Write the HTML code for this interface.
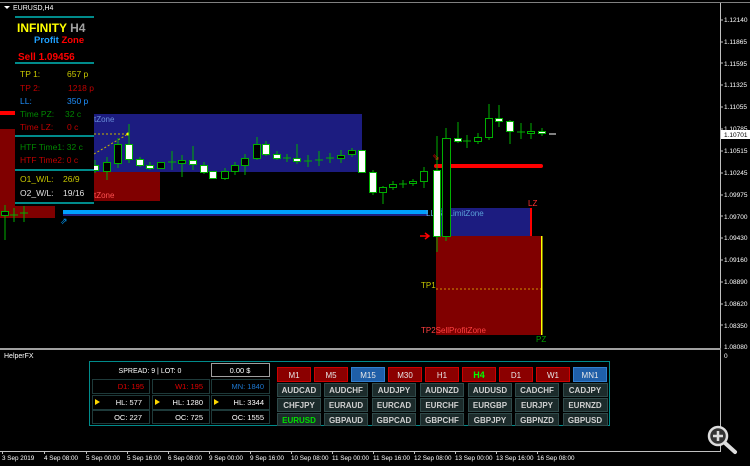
<!DOCTYPE html>
<html><head><meta charset="utf-8"><style>
html,body{margin:0;padding:0;background:#000;width:750px;height:466px;overflow:hidden}
svg{display:block}
text{font-family:"Liberation Sans",sans-serif}
</style></head><body>
<svg width="750" height="466" viewBox="0 0 750 466" xmlns="http://www.w3.org/2000/svg">
<rect width="750" height="466" fill="#000"/>
<line x1="0" y1="2.5" x2="750" y2="2.5" stroke="#808080"/>
<line x1="720.5" y1="3" x2="720.5" y2="451" stroke="#c0c0c0"/>
<rect x="0" y="348" width="721" height="2" fill="#a0a0a0"/>
<line x1="0" y1="451.5" x2="721" y2="451.5" stroke="#c0c0c0"/>
<path d="M4 6 L10 6 L7 9 Z" fill="#fff"/>
<text x="13" y="10" font-size="7" fill="#fff">EURUSD,H4</text>
<text x="4" y="358" font-size="7" fill="#fff">HelperFX</text>
<g font-size="6.5" fill="#fff">
<text x="724" y="22">1.12140</text><text x="724" y="44">1.11865</text><text x="724" y="66">1.11595</text><text x="724" y="87">1.11325</text><text x="724" y="109">1.11055</text><text x="724" y="131">1.10785</text><text x="724" y="153">1.10515</text><text x="724" y="175">1.10245</text><text x="724" y="197">1.09975</text><text x="724" y="219">1.09700</text><text x="724" y="240">1.09430</text><text x="724" y="262">1.09160</text><text x="724" y="284">1.08890</text><text x="724" y="306">1.08620</text><text x="724" y="328">1.08350</text><text x="724" y="349">1.08080</text><text x="724" y="358">0</text>
</g>
<g stroke="#c0c0c0"><line x1="720" y1="20" x2="723" y2="20"/><line x1="720" y1="42" x2="723" y2="42"/><line x1="720" y1="63" x2="723" y2="63"/><line x1="720" y1="85" x2="723" y2="85"/><line x1="720" y1="107" x2="723" y2="107"/><line x1="720" y1="129" x2="723" y2="129"/><line x1="720" y1="151" x2="723" y2="151"/><line x1="720" y1="173" x2="723" y2="173"/><line x1="720" y1="195" x2="723" y2="195"/><line x1="720" y1="216" x2="723" y2="216"/><line x1="720" y1="238" x2="723" y2="238"/><line x1="720" y1="260" x2="723" y2="260"/><line x1="720" y1="282" x2="723" y2="282"/><line x1="720" y1="304" x2="723" y2="304"/><line x1="720" y1="325" x2="723" y2="325"/></g>
<rect x="721" y="130" width="29" height="9" fill="#fff"/>
<text x="724" y="137" font-size="6.5" fill="#000">1.10701</text>
<g font-size="6.3" fill="#fff">
<text x="2" y="460">3 Sep 2019</text><text x="44" y="460">4 Sep 08:00</text><text x="86" y="460">5 Sep 00:00</text><text x="127" y="460">5 Sep 16:00</text><text x="168" y="460">6 Sep 08:00</text><text x="209" y="460">9 Sep 00:00</text><text x="250" y="460">9 Sep 16:00</text><text x="291" y="460">10 Sep 08:00</text><text x="332" y="460">11 Sep 00:00</text><text x="373" y="460">11 Sep 16:00</text><text x="414" y="460">12 Sep 08:00</text><text x="455" y="460">13 Sep 00:00</text><text x="496" y="460">13 Sep 16:00</text><text x="537" y="460">16 Sep 08:00</text>
</g>
<g stroke="#c0c0c0"><line x1="2.5" y1="451" x2="2.5" y2="454"/><line x1="44.5" y1="451" x2="44.5" y2="454"/><line x1="86.5" y1="451" x2="86.5" y2="454"/><line x1="127.5" y1="451" x2="127.5" y2="454"/><line x1="168.5" y1="451" x2="168.5" y2="454"/><line x1="209.5" y1="451" x2="209.5" y2="454"/><line x1="250.5" y1="451" x2="250.5" y2="454"/><line x1="291.5" y1="451" x2="291.5" y2="454"/><line x1="332.5" y1="451" x2="332.5" y2="454"/><line x1="373.5" y1="451" x2="373.5" y2="454"/><line x1="414.5" y1="451" x2="414.5" y2="454"/><line x1="455.5" y1="451" x2="455.5" y2="454"/><line x1="496.5" y1="451" x2="496.5" y2="454"/><line x1="537.5" y1="451" x2="537.5" y2="454"/></g>
<rect x="0" y="129" width="55" height="89" fill="#800000"/>
<rect x="0" y="111" width="15" height="4" fill="#ff0000"/>
<rect x="93" y="114" width="269" height="58" fill="#1c1c80"/>
<rect x="93" y="172" width="67" height="29" fill="#800000"/>
<text x="94" y="122" font-size="8" fill="#6a8fd8">tZone</text>
<text x="94" y="198" font-size="8" fill="#ff5050">tZone</text>
<line x1="94" y1="134" x2="128" y2="134" stroke="#c8b400" stroke-dasharray="2,2"/>
<line x1="94" y1="154" x2="128" y2="134" stroke="#c8b400" stroke-dasharray="2,2"/>
<circle cx="128" cy="134" r="1.5" fill="#ff0"/>
<rect x="63" y="210" width="365" height="4" fill="#00a0ff"/>
<line x1="63" y1="215" x2="428" y2="215" stroke="#4040ff"/>
<text x="60" y="224" font-size="9" fill="#00a0ff">⇗</text>
<rect x="434" y="164" width="109" height="4" rx="2" fill="#ff0000"/>
<rect x="436" y="208" width="95" height="29" fill="#1c1c80"/>
<rect x="530" y="208" width="2" height="29" fill="#ff0000"/>
<text x="528" y="206" font-size="8" fill="#ff3030">LZ</text>
<text x="426" y="216" font-size="8" fill="#5aa0d8">LL SL LimitZone</text>
<rect x="436" y="236" width="106" height="99" fill="#800000"/>
<rect x="541" y="236" width="1.5" height="99" fill="#ff0"/>
<line x1="436" y1="289" x2="541" y2="289" stroke="#d09000" stroke-dasharray="2,2"/>
<text x="421" y="288" font-size="8" fill="#c8c800">TP1</text>
<text x="421" y="333" font-size="8" fill="#ff4040">TP2SellProfitZone</text>
<text x="536" y="342" font-size="8" fill="#00a000">PZ</text>
<path d="M420 236 H428 M425 233 L429 236 L425 239" stroke="#ff0000" stroke-width="1.5" fill="none"/>
<text x="432" y="160" font-size="9" fill="#ff0000">⇘</text>
<g stroke="#00b000" stroke-width="1">
<line x1="5" y1="205" x2="5" y2="240"/><rect x="1.5" y="211.5" width="7" height="4" fill="#000"/>
<line x1="14" y1="208" x2="14" y2="222"/><line x1="10" y1="215" x2="18" y2="215"/>
<line x1="24" y1="205" x2="24" y2="222"/><line x1="20" y1="213" x2="28" y2="213"/>
<line x1="95" y1="160" x2="95" y2="173"/><rect x="91.5" y="165.5" width="7" height="5" fill="#fff"/>
<line x1="107" y1="157" x2="107" y2="180"/><rect x="103.5" y="162.5" width="7" height="9" fill="#000"/>
<line x1="118" y1="138" x2="118" y2="168"/><rect x="114.5" y="144.5" width="7" height="19" fill="#000"/>
<line x1="129" y1="124" x2="129" y2="163"/><rect x="125.5" y="144.5" width="7" height="15" fill="#fff"/>
<line x1="140" y1="157" x2="140" y2="167"/><rect x="136.5" y="159.5" width="7" height="6" fill="#fff"/>
<line x1="150" y1="162" x2="150" y2="170"/><rect x="146.5" y="165.5" width="7" height="3" fill="#fff"/>
<rect x="157.5" y="162.5" width="7" height="6" fill="#000"/>
<line x1="172" y1="151" x2="172" y2="170"/><line x1="168" y1="162" x2="176" y2="162"/>
<line x1="182" y1="155" x2="182" y2="177"/><rect x="178.5" y="160.5" width="7" height="3" fill="#000"/>
<line x1="193" y1="146" x2="193" y2="170"/><rect x="189.5" y="160.5" width="7" height="4" fill="#fff"/>
<line x1="204" y1="162" x2="204" y2="174"/><rect x="200.5" y="165.5" width="7" height="7" fill="#fff"/>
<rect x="209.5" y="171.5" width="7" height="7" fill="#fff"/>
<line x1="225" y1="168" x2="225" y2="180"/><rect x="221.5" y="171.5" width="7" height="7" fill="#000"/>
<line x1="235" y1="162" x2="235" y2="175"/><rect x="231.5" y="165.5" width="7" height="6" fill="#000"/>
<line x1="245" y1="154" x2="245" y2="175"/><rect x="241.5" y="158.5" width="7" height="7" fill="#000"/>
<line x1="257" y1="137" x2="257" y2="160"/><rect x="253.5" y="144.5" width="7" height="14" fill="#000"/>
<line x1="266" y1="141" x2="266" y2="156"/><rect x="262.5" y="144.5" width="7" height="10" fill="#fff"/>
<line x1="277" y1="151" x2="277" y2="160"/><rect x="273.5" y="154.5" width="7" height="4" fill="#fff"/>
<line x1="287" y1="154" x2="287" y2="162"/><line x1="283" y1="158" x2="291" y2="158"/>
<line x1="297" y1="144" x2="297" y2="164"/><rect x="293.5" y="158.5" width="7" height="3" fill="#fff"/>
<line x1="308" y1="155" x2="308" y2="167"/><line x1="304" y1="161" x2="312" y2="161"/>
<line x1="319" y1="151" x2="319" y2="166"/><line x1="315" y1="160" x2="323" y2="160"/>
<line x1="330" y1="153" x2="330" y2="163"/><line x1="326" y1="158" x2="334" y2="158"/>
<line x1="341" y1="150" x2="341" y2="163"/><rect x="337.5" y="155.5" width="7" height="3" fill="#000"/>
<line x1="352" y1="148" x2="352" y2="157"/><rect x="348.5" y="150.5" width="7" height="4" fill="#000"/>
<rect x="358.5" y="150.5" width="7" height="22" fill="#fff"/>
<line x1="373" y1="170" x2="373" y2="195"/><rect x="369.5" y="172.5" width="7" height="20" fill="#fff"/>
<line x1="383" y1="186" x2="383" y2="204"/><rect x="379.5" y="187.5" width="7" height="5" fill="#000"/>
<line x1="393" y1="181" x2="393" y2="190"/><rect x="389.5" y="184.5" width="7" height="3" fill="#000"/>
<line x1="403" y1="180" x2="403" y2="188"/><line x1="399" y1="184" x2="407" y2="184"/>
<line x1="413" y1="179" x2="413" y2="186"/><rect x="409.5" y="181.5" width="7" height="2" fill="#000"/>
<line x1="424" y1="167" x2="424" y2="188"/><rect x="420.5" y="171.5" width="7" height="10" fill="#000"/>
<line x1="437" y1="136" x2="437" y2="252"/><rect x="433.5" y="170.5" width="7" height="66" fill="#fff"/>
<line x1="446" y1="128" x2="446" y2="241"/><rect x="442.5" y="138.5" width="8" height="98" fill="#000"/>
<line x1="458" y1="122" x2="458" y2="143"/><rect x="454.5" y="138.5" width="7" height="3" fill="#fff"/>
<line x1="467" y1="135" x2="467" y2="148"/><line x1="463" y1="141" x2="471" y2="141"/>
<line x1="478" y1="133" x2="478" y2="144"/><rect x="474.5" y="137.5" width="7" height="4" fill="#000"/>
<line x1="489" y1="104" x2="489" y2="140"/><rect x="485.5" y="118.5" width="7" height="19" fill="#000"/>
<line x1="499" y1="105" x2="499" y2="127"/><rect x="495.5" y="118.5" width="7" height="3" fill="#fff"/>
<line x1="510" y1="120" x2="510" y2="144"/><rect x="506.5" y="121.5" width="7" height="10" fill="#fff"/>
<line x1="521" y1="123" x2="521" y2="139"/><line x1="517" y1="132" x2="525" y2="132"/>
<line x1="531" y1="123" x2="531" y2="139"/><rect x="527.5" y="131.5" width="7" height="2" fill="#000"/>
<line x1="542" y1="128" x2="542" y2="136"/><rect x="538.5" y="131.5" width="7" height="2" fill="#fff"/>
<line x1="549" y1="134" x2="556" y2="134" stroke="#fff"/>
</g>
<rect x="15" y="14" width="79" height="192" fill="#000"/>
<g fill="#008b8b"><rect x="15" y="16" width="79" height="2"/><rect x="15" y="62" width="79" height="2"/><rect x="15" y="135" width="79" height="2"/><rect x="15" y="169" width="79" height="2"/><rect x="15" y="202" width="79" height="2"/></g>
<text x="17" y="32" font-size="12" font-weight="bold" fill="#ffff00">INFINITY <tspan fill="#a0a0a0">H4</tspan></text>
<text x="34" y="43" font-size="9.5" font-weight="bold" fill="#1ea0ff">Profit <tspan fill="#ff0000">Zone</tspan></text>
<text x="18" y="60" font-size="10" font-weight="bold" fill="#ff0000">Sell 1.09456</text>
<g font-size="8.5">
<text x="20" y="77" fill="#c8c800">TP 1:</text><text x="67" y="77" fill="#c8c800">657 p</text>
<text x="20" y="91" fill="#c00000">TP 2:</text><text x="68" y="91" fill="#c00000">1218 p</text>
<text x="20" y="104" fill="#1e90ff">LL:</text><text x="67" y="104" fill="#1e90ff">350 p</text>
<text x="20" y="117" fill="#008800">Time PZ:</text><text x="65" y="117" fill="#008800">32 c</text>
<text x="20" y="130" fill="#c00000">Time LZ:</text><text x="67" y="130" fill="#c00000">0 c</text>
<text x="20" y="150" fill="#008800">HTF Time1: 32 c</text>
<text x="20" y="163" fill="#c00000">HTF Time2: 0 c</text>
<text x="20" y="182" fill="#c8c800">O1_W/L:</text><text x="63" y="182" fill="#c8c800">26/9</text>
<text x="20" y="196" fill="#e0e0e0">O2_W/L:</text><text x="63" y="196" fill="#e0e0e0">19/16</text>
</g>
<rect x="89.5" y="361.5" width="520" height="64" fill="#000" stroke="#008b8b"/>
<text x="150" y="373" font-size="7" fill="#fff" text-anchor="middle">SPREAD: 9  |  LOT: 0</text>
<rect x="211.5" y="363.5" width="58" height="13" fill="#000" stroke="#a0a0a0"/>
<text x="240" y="373" font-size="7.5" fill="#fff" text-anchor="middle">0.00 $</text>
<g fill="#000" stroke="#1e3a3a">
<rect x="92.5" y="379.5" width="57" height="14"/><rect x="152.5" y="379.5" width="57" height="14"/><rect x="211.5" y="379.5" width="58" height="14"/>
<rect x="92.5" y="395.5" width="57" height="14"/><rect x="152.5" y="395.5" width="57" height="14"/><rect x="211.5" y="395.5" width="58" height="14"/>
<rect x="92.5" y="410.5" width="57" height="13"/><rect x="152.5" y="410.5" width="57" height="13"/><rect x="211.5" y="410.5" width="58" height="13"/>
</g>
<g font-size="7.5" text-anchor="end">
<text x="144" y="389" fill="#e00000">D1: 195</text><text x="203" y="389" fill="#e00000">W1: 195</text><text x="264" y="389" fill="#1e78d0">MN: 1840</text>
<text x="142" y="405" fill="#fff">HL: 577</text><text x="203" y="405" fill="#fff">HL: 1280</text><text x="264" y="405" fill="#fff">HL: 3344</text>
<text x="142" y="420" fill="#fff">OC: 227</text><text x="203" y="420" fill="#fff">OC: 725</text><text x="264" y="420" fill="#fff">OC: 1555</text>
</g>
<g fill="#ffd700"><path d="M95 399 L100 402 L95 405Z"/><path d="M155 399 L160 402 L155 405Z"/><path d="M214 399 L219 402 L214 405Z"/></g>
<g stroke-width="1">
<rect x="277.5" y="367.5" width="33" height="14" fill="#8b0000" stroke="#d00000"/>
<rect x="314.5" y="367.5" width="33" height="14" fill="#8b0000" stroke="#d00000"/>
<rect x="351.5" y="367.5" width="33" height="14" fill="#1f5fa8" stroke="#3080d0"/>
<rect x="388.5" y="367.5" width="33" height="14" fill="#8b0000" stroke="#d00000"/>
<rect x="425.5" y="367.5" width="33" height="14" fill="#8b0000" stroke="#d00000"/>
<rect x="462.5" y="367.5" width="33" height="14" fill="#8b0000" stroke="#d00000"/>
<rect x="499.5" y="367.5" width="33" height="14" fill="#8b0000" stroke="#d00000"/>
<rect x="536.5" y="367.5" width="33" height="14" fill="#8b0000" stroke="#d00000"/>
<rect x="573.5" y="367.5" width="33" height="14" fill="#1f5fa8" stroke="#3080d0"/>
</g>
<g font-size="8" fill="#e8e8e8" text-anchor="middle">
<text x="294" y="378">M1</text><text x="331" y="378">M5</text><text x="368" y="378">M15</text><text x="405" y="378">M30</text><text x="442" y="378">H1</text><text x="479" y="378" fill="#00ff00" font-weight="bold" font-size="9">H4</text><text x="516" y="378">D1</text><text x="553" y="378">W1</text><text x="590" y="378">MN1</text>
</g>
<g fill="#1c2b2b" stroke="#2f4a4a">
<rect x="277.5" y="383.5" width="43" height="13"/><rect x="324.5" y="383.5" width="43" height="13"/><rect x="372.5" y="383.5" width="43" height="13"/><rect x="420.5" y="383.5" width="43" height="13"/><rect x="468.5" y="383.5" width="43" height="13"/><rect x="515.5" y="383.5" width="43" height="13"/><rect x="563.5" y="383.5" width="44" height="13"/>
<rect x="277.5" y="398.5" width="43" height="13"/><rect x="324.5" y="398.5" width="43" height="13"/><rect x="372.5" y="398.5" width="43" height="13"/><rect x="420.5" y="398.5" width="43" height="13"/><rect x="468.5" y="398.5" width="43" height="13"/><rect x="515.5" y="398.5" width="43" height="13"/><rect x="563.5" y="398.5" width="44" height="13"/>
<rect x="277.5" y="413.5" width="43" height="12"/><rect x="324.5" y="413.5" width="43" height="12"/><rect x="372.5" y="413.5" width="43" height="12"/><rect x="420.5" y="413.5" width="43" height="12"/><rect x="468.5" y="413.5" width="43" height="12"/><rect x="515.5" y="413.5" width="43" height="12"/><rect x="563.5" y="413.5" width="44" height="12"/>
</g>
<g font-size="8" font-weight="bold" fill="#d0d0d0" text-anchor="middle" style="font-family:'Liberation Mono',monospace">
<text x="299" y="393">AUDCAD</text><text x="346" y="393">AUDCHF</text><text x="394" y="393">AUDJPY</text><text x="442" y="393">AUDNZD</text><text x="490" y="393">AUDUSD</text><text x="537" y="393">CADCHF</text><text x="585" y="393">CADJPY</text>
<text x="299" y="408">CHFJPY</text><text x="346" y="408">EURAUD</text><text x="394" y="408">EURCAD</text><text x="442" y="408">EURCHF</text><text x="490" y="408">EURGBP</text><text x="537" y="408">EURJPY</text><text x="585" y="408">EURNZD</text>
<text x="299" y="423" fill="#00e000" font-weight="bold" style="font-family:'Liberation Sans',sans-serif" font-size="8">EURUSD</text><text x="346" y="423">GBPAUD</text><text x="394" y="423">GBPCAD</text><text x="442" y="423">GBPCHF</text><text x="490" y="423">GBPJPY</text><text x="537" y="423">GBPNZD</text><text x="585" y="423">GBPUSD</text>
</g>
<g>
<line x1="725" y1="443" x2="735" y2="452" stroke="#000" stroke-width="7" stroke-linecap="round"/>
<line x1="725" y1="443" x2="735" y2="452" stroke="#ddd" stroke-width="4" stroke-linecap="round"/>
<circle cx="718" cy="436" r="9" fill="#333" stroke="#ddd" stroke-width="2.5"/>
<path d="M713 436 H723 M718 431 V441" stroke="#ddd" stroke-width="2.5"/>
</g>
</svg>
</body></html>
